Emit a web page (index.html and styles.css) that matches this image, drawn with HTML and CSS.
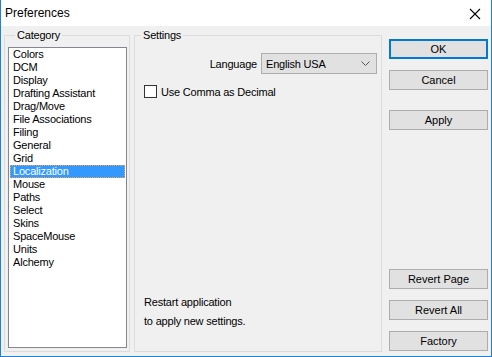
FILE: index.html
```html
<!DOCTYPE html>
<html lang="en">
<head>
    <meta charset="UTF-8">
    <title>Preferences</title>
    <link rel="stylesheet" href="styles.css">
</head>
<body>
    <div class="window">
        <div class="titlebar">
            <span class="title">Preferences</span>
            <svg class="close" width="12" height="12" viewBox="0 0 12 12">
                <path d="M1 1 L11 11 M11 1 L1 11" stroke="#000" stroke-width="1.1" fill="none"/>
            </svg>
        </div>

        <div class="content">
            <div class="group category">
                <div class="group-title">Category</div>
                <ul class="list">
                    <li>Colors</li>
                    <li>DCM</li>
                    <li>Display</li>
                    <li>Drafting Assistant</li>
                    <li>Drag/Move</li>
                    <li>File Associations</li>
                    <li>Filing</li>
                    <li>General</li>
                    <li>Grid</li>
                    <li class="selected">Localization</li>
                    <li>Mouse</li>
                    <li>Paths</li>
                    <li>Select</li>
                    <li>Skins</li>
                    <li>SpaceMouse</li>
                    <li>Units</li>
                    <li>Alchemy</li>
                </ul>
            </div>

            <div class="group settings">
                <div class="group-title">Settings</div>
                <div class="lang-row">
                    <span class="lang-label">Language</span>
                    <div class="combo">
                        <span>English USA</span>
                        <svg class="chevron" width="9" height="6" viewBox="0 0 9 6">
                            <polyline points="0.5,0.5 4.5,4.5 8.5,0.5" stroke="#555" stroke-width="1" fill="none"/>
                        </svg>
                    </div>
                </div>
                <div class="check-row">
                    <span class="checkbox"></span>
                    <span>Use Comma as Decimal</span>
                </div>
                <p class="note">Restart application<br>to apply new settings.</p>
            </div>

            <div class="buttons">
                <button class="btn default">OK</button>
                <button class="btn">Cancel</button>
                <button class="btn apply">Apply</button>
                <button class="btn">Revert Page</button>
                <button class="btn">Revert All</button>
                <button class="btn">Factory</button>
            </div>
        </div>
    </div>
</body>
</html>
```

FILE: styles.css
```css
* {
    box-sizing: border-box;
    margin: 0;
    padding: 0;
}

body {
    font-family: 'Liberation Sans', Arial, sans-serif;
    font-size: 11px;
    letter-spacing: -0.2px;
    color: #000;
    background: #f0f0f0;
}

.window {
    width: 492px;
    height: 357px;
    display: flex;
    flex-direction: column;
    border: 1px solid #1883d7;
    border-top: none;
    background: #f0f0f0;
}

.titlebar {
    height: 26px;
    flex: none;
    display: flex;
    align-items: center;
    justify-content: space-between;
    background: #fff;
    padding: 0 10px 0 4px;
}

.title {
    font-size: 12px;
    line-height: 14px;
    letter-spacing: 0;
}

.close {
    margin-top: 1px;
}

.content {
    flex: 1;
    display: flex;
    padding: 9px 3px 4px 3px;
}

.group {
    display: flex;
    flex-direction: column;
    border: 1px solid #dcdcdc;
}

.group-title {
    align-self: flex-start;
    line-height: 13px;
    padding: 0 2px;
    margin-top: -7px;
    background: #f0f0f0;
}

/* Category */
.category {
    width: 126px;
    padding: 0 2px 3px 3px;
}

.category .group-title {
    margin-left: 7px;
    margin-bottom: 5px;
}

.list {
    flex: 1;
    list-style: none;
    background: #fff;
    border: 1px solid #828790;
}

.list li {
    height: 13px;
    line-height: 13px;
    padding-left: 3px;
    margin: 0 1px;
    white-space: nowrap;
}

.list li.selected {
    background: #3399ff;
    color: #fff;
    outline: 1px dotted #f6a04a;
    outline-offset: -1px;
}

/* Settings */
.settings {
    width: 248px;
    margin-left: 4px;
    padding: 0 4px 0 9px;
}

.settings .group-title {
    margin-left: -3px;
}

.lang-row {
    display: flex;
    justify-content: flex-end;
    align-items: center;
    margin-top: 11px;
}

.lang-label {
    margin-right: 4px;
}

.combo {
    width: 116px;
    height: 21px;
    display: flex;
    align-items: center;
    justify-content: space-between;
    padding: 0 6px 0 4px;
    background: #e1e1e1;
    border: 1px solid #adadad;
}

.check-row {
    display: flex;
    align-items: center;
    margin-top: 11px;
}

.checkbox {
    width: 13px;
    height: 13px;
    border: 1px solid #333;
    background: #fff;
    margin-right: 4px;
}

.note {
    margin-top: auto;
    margin-bottom: 20px;
    line-height: 19px;
}

/* Buttons */
.buttons {
    width: 99px;
    margin-left: 7px;
    display: flex;
    flex-direction: column;
    padding: 4px 0 1px 0;
}

.btn {
    height: 20px;
    flex: none;
    font-family: 'Liberation Sans', Arial, sans-serif;
    font-size: 11px;
    color: #000;
    background: #e1e1e1;
    border: 1px solid #adadad;
    margin-bottom: 11px;
}

.btn:last-child {
    margin-bottom: 0;
}

.btn.default {
    border: 2px solid #0078d7;
}

.btn.apply {
    margin-top: 9px;
    margin-bottom: auto;
}
```
